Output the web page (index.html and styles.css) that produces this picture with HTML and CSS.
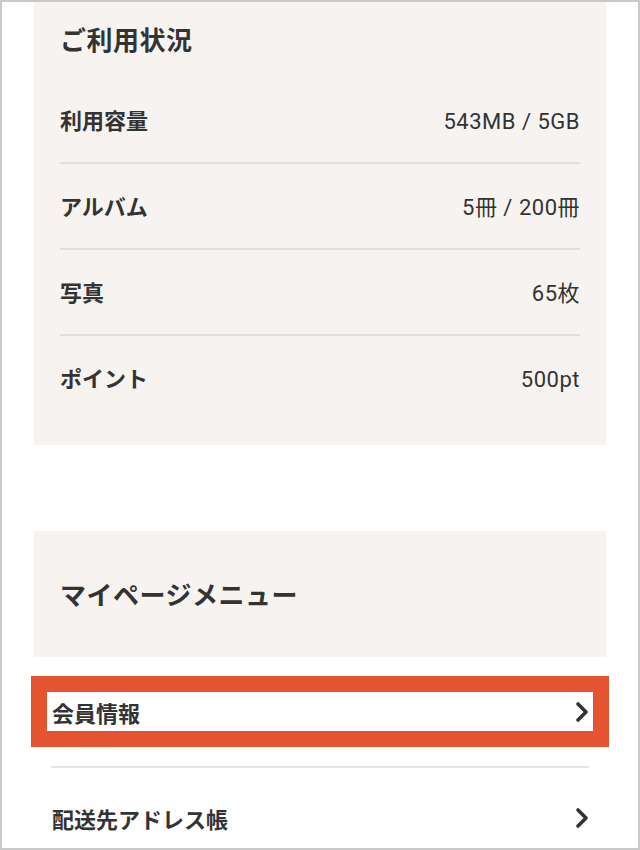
FILE: index.html
```html
<!DOCTYPE html>
<html lang="ja">
<head>
<meta charset="utf-8">
<title>マイページ</title>
<link rel="stylesheet" href="styles.css">
</head>
<body>
<div class="frame">
  <section class="panel usage">
    <h2 class="panel-title">ご利用状況</h2>
    <div class="row"><span class="label">利用容量</span><span class="value">543MB / 5GB</span></div>
    <div class="row"><span class="label">アルバム</span><span class="value">5冊 / 200冊</span></div>
    <div class="row"><span class="label">写真</span><span class="value">65枚</span></div>
    <div class="row"><span class="label">ポイント</span><span class="value">500pt</span></div>
  </section>

  <section class="panel menu-head">
    <h2 class="panel-title">マイページメニュー</h2>
  </section>

  <ul class="menu">
    <li class="menu-item">
      <a class="menu-link highlight" href="#">
        <span>会員情報</span>
        <svg class="chev" viewBox="0 0 14 22" width="14" height="22"><polyline points="3,3 11,11 3,19" fill="none" stroke="#333" stroke-width="3.6" stroke-linecap="round" stroke-linejoin="round"/></svg>
      </a>
    </li>
    <li class="menu-item">
      <a class="menu-link" href="#">
        <span>配送先アドレス帳</span>
        <svg class="chev" viewBox="0 0 14 22" width="14" height="22"><polyline points="3,3 11,11 3,19" fill="none" stroke="#333" stroke-width="3.6" stroke-linecap="round" stroke-linejoin="round"/></svg>
      </a>
    </li>
  </ul>
</div>
</body>
</html>
```

FILE: styles.css
```css
* { box-sizing: border-box; }
html, body { margin: 0; padding: 0; }
body {
  font-family: "Noto Sans CJK JP", "Noto Sans", sans-serif;
  color: #333;
  background: #fff;
}
.frame {
  width: 640px;
  height: 850px;
  border: 2px solid #c9c9c9;
  overflow: hidden;
  background: #fff;
}
.panel {
  background: #f6f3f0;
  margin: 0 32px;
  padding: 0 26px;
}
.panel-title {
  margin: 0;
  font-size: 26px;
  font-weight: 700;
  line-height: 40px;
  letter-spacing: 0.5px;
}
.usage .panel-title {
  padding: 17px 0 19px;
}
.usage {
  padding-bottom: 25px;
}
.row {
  display: flex;
  justify-content: space-between;
  align-items: baseline;
  height: 86px;
  padding-top: 25px;
  border-bottom: 2px solid #e2e0dc;
}
.row:last-child { border-bottom: none; height: 84px; }
.label {
  font-size: 22px;
  font-weight: 700;
  line-height: 32px;
}
.value {
  font-family: Roboto, "Noto Sans CJK JP", sans-serif;
  font-size: 22px;
  font-weight: 400;
  line-height: 32px;
  letter-spacing: 0.5px;
}
.menu-head {
  margin-top: 86px;
}
.menu-head .panel-title {
  padding: 43px 0;
}
.menu {
  list-style: none;
  margin: 0 49px;
  padding: 0;
}
.menu-item {
  padding: 39px 0;
  border-bottom: 2px solid #e4e4e4;
}
.menu-item + .menu-item { padding-top: 34px; }
.menu-link {
  display: flex;
  justify-content: space-between;
  align-items: center;
  height: 31px;
  padding-left: 1px;
  color: #333;
  text-decoration: none;
  font-size: 22px;
  font-weight: 700;
}
.highlight {
  outline: 16px solid #e4552f;
  outline-offset: 4px;
}
.chev { display: block; }
```
